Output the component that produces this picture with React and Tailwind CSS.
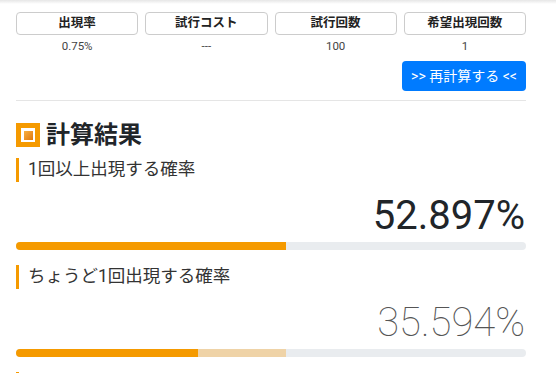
import React from 'react';

const font = { fontFamily: 'Roboto, "Noto Sans CJK JP", sans-serif' };

const params = [
  { label: '出現率', value: '0.75%' },
  { label: '試行コスト', value: '---' },
  { label: '試行回数', value: '100' },
  { label: '希望出現回数', value: '1' },
];

function SubHeading({ children }) {
  return (
    <div className="flex items-center h-[24px] border-l-[3px] border-[#f59a00] pl-[9px] text-[17.5px] leading-none text-[#333]">
      {children}
    </div>
  );
}

function Result({ label, value, thin, segments }) {
  return (
    <div className="flex flex-col">
      <SubHeading>{label}</SubHeading>
      <div
        className={`mt-[10px] text-right text-[40px] leading-[48px] pr-[1px] ${thin ? 'font-thin text-[#555]' : 'font-normal text-[#212529]'}`}
      >
        {value}
      </div>
      <div className="mt-[2px] h-[8px] rounded-full bg-[#e9ecef] overflow-hidden flex">
        {segments.map((s, i) => (
          <div key={i} className={s.cls} style={{ width: `${s.w}%` }} />
        ))}
      </div>
    </div>
  );
}

export default function App() {
  return (
    <div className="w-[556px] h-[373px] overflow-hidden bg-white relative" style={font}>
      <div className="absolute top-0 left-0 right-0 h-[4px] bg-gradient-to-b from-[#e6e6e6] to-white" />
      <div className="w-[510px] ml-4 pt-[12px]">
        {/* Parameters */}
        <div className="grid grid-cols-4 gap-x-[7px]">
          {params.map((p) => (
            <div key={p.label} className="flex flex-col items-center">
              <div className="w-full h-[23px] border border-[#ccc] rounded-[4px] flex items-center justify-center text-[12.5px] font-bold text-[#222]">
                {p.label}
              </div>
              <div className="mt-[4px] text-[11.5px] leading-[14px] text-[#444]">{p.value}</div>
            </div>
          ))}
        </div>
        <div className="flex justify-end mt-[8px]">
          <button className="w-[124px] h-[30px] rounded-[4px] bg-[#007bff] text-white text-[14px] flex items-center justify-center">
            &gt;&gt; 再計算する &lt;&lt;
          </button>
        </div>
        <div className="mt-[9px] h-px bg-[#e5e5e5]" />

        {/* Results */}
        <div className="mt-[20px] flex items-center gap-[6px]">
          <div className="w-[24px] h-[24px] bg-[#f59a00] flex items-center justify-center">
            <div className="w-[14px] h-[14px] bg-white flex items-center justify-center">
              <div className="w-[9px] h-[9px] bg-gradient-to-br from-[#f8b040] to-[#e07800]" />
            </div>
          </div>
          <div className="text-[24px] font-bold leading-[28px] text-[#212529]">計算結果</div>
        </div>

        <div className="mt-[9px]">
          <Result
            label="1回以上出現する確率"
            value="52.897%"
            segments={[{ w: 52.897, cls: 'h-full bg-[#f59a00]' }]}
          />
        </div>
        <div className="mt-[15px]">
          <Result
            label="ちょうど1回出現する確率"
            value="35.594%"
            thin
            segments={[
              { w: 35.594, cls: 'h-full bg-[#f59a00]' },
              { w: 17.303, cls: 'h-full bg-[#efd3a7]' },
            ]}
          />
        </div>
        <div className="mt-[15px]">
          <SubHeading>
            <span className="invisible">0回出現する確率</span>
          </SubHeading>
        </div>
      </div>
    </div>
  );
}
